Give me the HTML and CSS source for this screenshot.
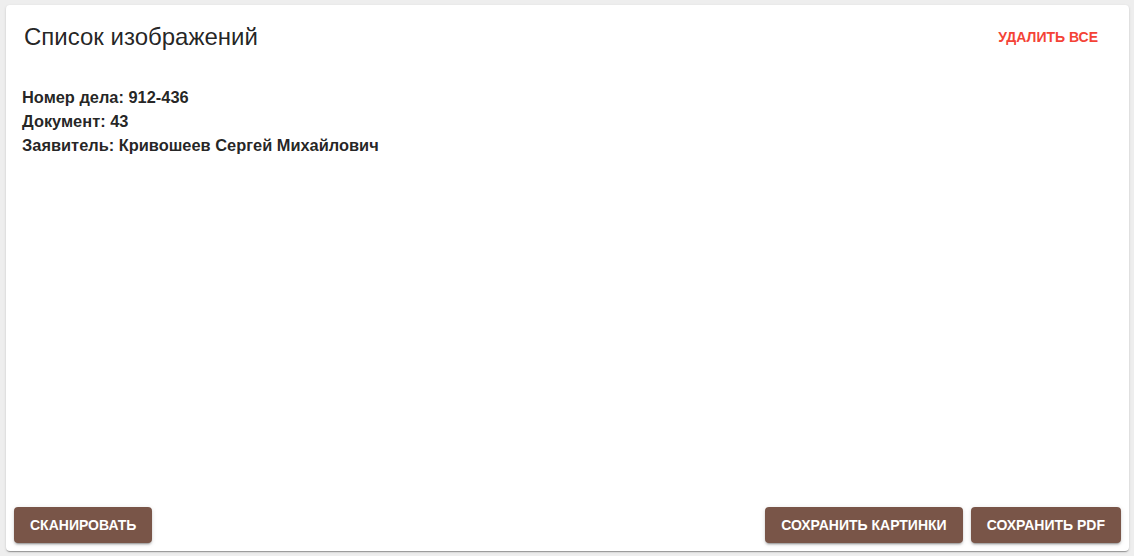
FILE: index.html
```html
<!DOCTYPE html>
<html lang="ru">
<head>
<meta charset="utf-8">
<title>Список изображений</title>
<link rel="stylesheet" href="styles.css">
</head>
<body>
<div class="card">
  <div class="card-header">
    <h1 class="title">Список изображений</h1>
    <button class="text-btn danger">Удалить все</button>
  </div>
  <div class="card-content">
    <div class="info">Номер дела: 912-436</div>
    <div class="info">Документ: 43</div>
    <div class="info">Заявитель: Кривошеев Сергей Михайлович</div>
  </div>
  <div class="card-actions">
    <button class="btn">Сканировать</button>
    <div class="spacer"></div>
    <button class="btn">Сохранить картинки</button>
    <button class="btn">Сохранить PDF</button>
  </div>
</div>
</body>
</html>
```
FILE: styles.css
```css
html, body {
  height: 100%;
}
body {
  margin: 0;
  padding: 5px 5px 5px 6px;
  box-sizing: border-box;
  background: #eeeeee;
  font-family: "Liberation Sans", Arial, sans-serif;
  color: rgba(0, 0, 0, 0.87);
}
.card {
  height: 100%;
  background: #fff;
  border-radius: 4px;
  box-shadow: 0 2px 1px -1px rgba(0,0,0,0.2), 0 1px 1px 0 rgba(0,0,0,0.14), 0 1px 3px 0 rgba(0,0,0,0.12);
  display: flex;
  flex-direction: column;
  box-sizing: border-box;
}
.card-header {
  display: flex;
  align-items: center;
  padding: 16px;
}
.title {
  flex: 1;
  margin: 0;
  font-size: 24px;
  font-weight: 400;
  line-height: 32px;
  padding-left: 2px;
}
.text-btn {
  background: none;
  border: none;
  font-family: inherit;
  font-size: 14px;
  font-weight: 700;
  text-transform: uppercase;
  padding: 6px 15px 6px 8px;
  line-height: 20px;
  cursor: pointer;
}
.danger {
  color: #f44336;
}
.card-content {
  flex: 1;
  padding: 16px 16px 16px 16px;
}
.info {
  font-size: 16.4px;
  font-weight: 700;
  line-height: 24px;
}
.card-actions {
  display: flex;
  align-items: center;
  gap: 8px;
  padding: 8px;
}
.spacer {
  flex: 1;
}
.btn {
  height: 36px;
  padding: 0 16px;
  border: none;
  border-radius: 4px;
  background: #795548;
  color: #fff;
  font-family: inherit;
  font-size: 14px;
  font-weight: 700;
  text-transform: uppercase;
  box-shadow: 0 3px 1px -2px rgba(0,0,0,0.2), 0 2px 2px 0 rgba(0,0,0,0.14), 0 1px 5px 0 rgba(0,0,0,0.12);
  cursor: pointer;
}
```
